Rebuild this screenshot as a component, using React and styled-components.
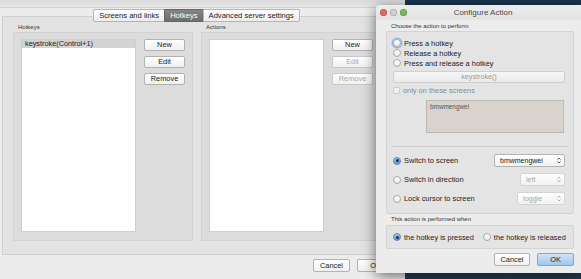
import React from 'react';
import styled, { createGlobalStyle, css } from 'styled-components';

const Global = createGlobalStyle`
  html, body { margin: 0; padding: 0; }
  body {
    width: 581px;
    height: 279px;
    overflow: hidden;
    font-family: "Liberation Sans", Arial, sans-serif;
    color: #222;
  }
`;

const Desktop = styled.div`
  position: relative;
  width: 581px;
  height: 279px;
  overflow: hidden;
  background: linear-gradient(180deg, #1b344f 0%, #223d5a 100%);
`;

/* ---------- main window (behind) ---------- */

const MainWindow = styled.div`
  position: absolute;
  left: 0;
  top: 0;
  width: 405px;
  height: 279px;
  background: #ececec;
  display: flex;
  flex-direction: column;
`;

const TopStrip = styled.div`
  height: 7px;
  background: linear-gradient(180deg, #dadada, #e6e6e6);
  border-bottom: 1px solid #d2d2d2;
`;

const TabArea = styled.div`
  display: flex;
  flex-direction: column;
  padding: 1px 13px 0 2px;
`;

const TabRow = styled.div`
  display: flex;
  justify-content: center;
  margin-bottom: -6px;
  position: relative;
  z-index: 1;
`;

const Tab = styled.div`
  height: 11px;
  padding: 0 5px;
  font-size: 7.6px;
  line-height: 11px;
  border: 1px solid #b4b4b4;
  margin-left: -1px;
  background: linear-gradient(180deg, #ffffff, #ececec);
  color: #222;
  ${({ $active }) =>
    $active &&
    css`
      background: linear-gradient(180deg, #858585, #6c6c6c);
      border-color: #666;
      color: #fff;
    `}
  &:first-child { border-radius: 2px 0 0 2px; }
  &:last-child { border-radius: 0 2px 2px 0; }
`;

const Panel = styled.div`
  height: 239px;
  box-sizing: border-box;
  border: 1px solid #d0d0d0;
  background: #e3e3e3;
  padding: 7px 0 0 10px;
  display: flex;
  gap: 8px;
`;

const Group = styled.div`
  display: flex;
  flex-direction: column;
  width: 180px;
`;

const GroupLabel = styled.div`
  font-size: 6px;
  line-height: 7px;
  height: 8px;
  padding-left: 5px;
  color: #333;
`;

const GroupBox = styled.div`
  height: 209px;
  box-sizing: border-box;
  border: 1px solid #d2d2d2;
  background: #dcdcdc;
  padding: 6px 7px;
  display: flex;
  gap: 8px;
`;

const List = styled.div`
  width: 116px;
  height: 193px;
  background: #fff;
  border: 1px solid #cfcfcf;
  box-sizing: border-box;
`;

const ListRow = styled.div`
  height: 8px;
  line-height: 8px;
  font-size: 7.3px;
  padding-left: 3px;
  background: #d3d3d3;
  color: #222;
`;

const ButtonColumn = styled.div`
  display: flex;
  flex-direction: column;
  gap: 5px;
`;

const PushButton = styled.div`
  width: ${({ $w }) => $w || 41}px;
  height: ${({ $h }) => $h || 12}px;
  box-sizing: border-box;
  border: 1px solid #b2b2b2;
  border-radius: 2px;
  background: linear-gradient(180deg, #ffffff, #f0f0f0);
  font-size: 7.4px;
  line-height: ${({ $h }) => ($h || 12) - 2}px;
  text-align: center;
  white-space: nowrap;
  color: ${({ $disabled }) => ($disabled ? '#a8a8a8' : '#222')};
  border-color: ${({ $disabled }) => ($disabled ? '#c8c8c8' : '#b2b2b2')};
  ${({ $primary }) =>
    $primary &&
    css`
      background: linear-gradient(180deg, #cfe4f8, #9ec7ee);
      border-color: #7fa7d2;
    `}
`;

const BottomBar = styled.div`
  display: flex;
  justify-content: flex-end;
  gap: 7px;
  padding: 4px 11px 0 0;
`;

/* ---------- dialog ---------- */

const Dialog = styled.div`
  position: absolute;
  left: 376px;
  top: 5px;
  width: 210px;
  height: 268px;
  background: #ececec;
  border-radius: 4px 4px 0 0;
  box-shadow: 0 3px 14px rgba(0, 0, 0, 0.55);
  display: flex;
  flex-direction: column;
`;

const TitleBar = styled.div`
  height: 15px;
  display: flex;
  align-items: center;
  padding-left: 4px;
  background: linear-gradient(180deg, #ececec, #e2e2e2);
  border-radius: 4px 4px 0 0;
`;

const Light = styled.span`
  width: 7px;
  height: 7px;
  border-radius: 50%;
  margin-right: 3px;
  background: ${({ $c }) => $c};
  box-shadow: inset 0 0 0 0.6px rgba(0, 0, 0, 0.25);
`;

const Title = styled.div`
  flex: 1;
  text-align: center;
  font-size: 8px;
  color: #4a4a4a;
  padding-right: 30px;
`;

const DialogBody = styled.div`
  padding: 0 12px 0 10px;
  display: flex;
  flex-direction: column;
`;

const Box = styled.div`
  box-sizing: border-box;
  border: 1px solid #d3d3d3;
  background: #e4e4e4;
  border-radius: 2px;
  padding: ${({ $pad }) => $pad || '6px 7px'};
  display: flex;
  flex-direction: ${({ $row }) => ($row ? 'row' : 'column')};
  align-items: ${({ $row }) => ($row ? 'center' : 'stretch')};
  height: ${({ $h }) => $h}px;
`;

const OptionRow = styled.div`
  display: flex;
  align-items: center;
  white-space: nowrap;
  height: ${({ $h }) => $h || 10}px;
  font-size: 7.4px;
  color: ${({ $muted }) => ($muted ? '#8a8a8a' : '#222')};
  gap: 3px;
`;

const Radio = styled.span`
  width: 8px;
  height: 8px;
  box-sizing: border-box;
  border-radius: 50%;
  border: 1px solid #a9a9a9;
  background: linear-gradient(180deg, #ffffff, #ececec);
  display: inline-flex;
  align-items: center;
  justify-content: center;
  flex: none;
  ${({ $focus }) =>
    $focus &&
    css`
      box-shadow: 0 0 0 1.5px #8db8e6;
    `}
  ${({ $checked }) =>
    $checked &&
    css`
      background: linear-gradient(180deg, #9fc6ee, #5d9ae0);
      border-color: #5a86bb;
      &::after {
        content: '';
        width: 3px;
        height: 3px;
        border-radius: 50%;
        background: #1b2a3c;
      }
    `}
`;

const Check = styled.span`
  width: 7px;
  height: 7px;
  box-sizing: border-box;
  border-radius: 1px;
  border: 1px solid #cdcdcd;
  background: #efefef;
  flex: none;
`;

const WideButton = styled.div`
  height: 12px;
  box-sizing: border-box;
  border: 1px solid #cfcfcf;
  border-radius: 2px;
  background: linear-gradient(180deg, #f6f6f6, #ebebeb);
  text-align: center;
  font-size: 7.2px;
  line-height: 10px;
  color: #9a9a9a;
  margin: 3px 1px 2px 0;
`;

const ScreensList = styled.div`
  margin: 5px 2px 0 33px;
  height: 33px;
  box-sizing: border-box;
  background: #d8d3cc;
  border: 1px solid #bdb8b1;
  font-size: 6.4px;
  color: #555;
  padding: 2px 3px;
`;

const Separator = styled.div`
  height: 1px;
  background: #cccccc;
  margin: 13px -2px 4px -2px;
`;

const SwitchRow = styled(OptionRow)`
  justify-content: space-between;
  height: 19px;
`;

const RadioLabel = styled.div`
  display: flex;
  align-items: center;
  gap: 3px;
`;

const Popup = styled.div`
  width: ${({ $w }) => $w}px;
  height: 13px;
  box-sizing: border-box;
  border: 1px solid ${({ $disabled }) => ($disabled ? '#d4d4d4' : '#b4b4b4')};
  border-radius: 2px;
  background: linear-gradient(180deg, #ffffff, #f1f1f1);
  display: flex;
  align-items: center;
  font-size: 7px;
  color: ${({ $disabled }) => ($disabled ? '#a9a9a9' : '#222')};
  padding: 0 3px 0 5px;
  margin-right: 1px;
`;

const PopupText = styled.span`
  flex: 1;
`;

const Arrows = ({ color }) => (
  <svg width="4" height="7" viewBox="0 0 4 7">
    <path d="M0.5 2.5 L2 1 L3.5 2.5 M0.5 4.5 L2 6 L3.5 4.5" fill="none" stroke={color} strokeWidth="0.9" />
  </svg>
);

const SmallLabel = styled.div`
  font-size: 6px;
  line-height: 7px;
  color: #333;
  padding-left: 5px;
  margin: ${({ $m }) => $m || '0'};
`;

const WhenRow = styled.div`
  display: flex;
  align-items: center;
  gap: 9px;
`;

const DialogButtons = styled.div`
  display: flex;
  justify-content: flex-end;
  gap: 7px;
  padding: 4px 0 0 0;
`;

export default function App() {
  return (
    <Desktop>
      <Global />
      <MainWindow>
        <TopStrip />
        <TabArea>
          <TabRow>
            <Tab>Screens and links</Tab>
            <Tab $active>Hotkeys</Tab>
            <Tab>Advanced server settings</Tab>
          </TabRow>
          <Panel>
            <Group>
              <GroupLabel>Hotkeys</GroupLabel>
              <GroupBox>
                <List>
                  <ListRow>keystroke(Control+1)</ListRow>
                </List>
                <ButtonColumn>
                  <PushButton>New</PushButton>
                  <PushButton>Edit</PushButton>
                  <PushButton>Remove</PushButton>
                </ButtonColumn>
              </GroupBox>
            </Group>
            <Group>
              <GroupLabel>Actions</GroupLabel>
              <GroupBox>
                <List />
                <ButtonColumn>
                  <PushButton>New</PushButton>
                  <PushButton $disabled>Edit</PushButton>
                  <PushButton $disabled>Remove</PushButton>
                </ButtonColumn>
              </GroupBox>
            </Group>
          </Panel>
        </TabArea>
        <BottomBar>
          <PushButton $w={37} $h={13}>Cancel</PushButton>
          <PushButton $w={37} $h={13}>OK</PushButton>
        </BottomBar>
      </MainWindow>

      <Dialog>
        <TitleBar>
          <Light $c="#e06a62" />
          <Light $c="#cfcfcf" />
          <Light $c="#78b85c" />
          <Title>Configure Action</Title>
        </TitleBar>
        <DialogBody>
          <SmallLabel $m="3px 0 1px 0">Choose the action to perform</SmallLabel>
          <Box $h={183} $pad="6px 7px 0 6px">
            <OptionRow>
              <Radio $focus />
              Press a hotkey
            </OptionRow>
            <OptionRow>
              <Radio />
              Release a hotkey
            </OptionRow>
            <OptionRow>
              <Radio />
              Press and release a hotkey
            </OptionRow>
            <WideButton>keystroke()</WideButton>
            <OptionRow $muted>
              <Check />
              only on these screens
            </OptionRow>
            <ScreensList>bmwmengwei</ScreensList>
            <Separator />
            <SwitchRow>
              <RadioLabel>
                <Radio $checked />
                Switch to screen
              </RadioLabel>
              <Popup $w={71}>
                <PopupText>bmwmengwei</PopupText>
                <Arrows color="#444" />
              </Popup>
            </SwitchRow>
            <SwitchRow>
              <RadioLabel>
                <Radio />
                Switch in direction
              </RadioLabel>
              <Popup $w={45} $disabled>
                <PopupText>left</PopupText>
                <Arrows color="#aaa" />
              </Popup>
            </SwitchRow>
            <SwitchRow>
              <RadioLabel>
                <Radio />
                Lock cursor to screen
              </RadioLabel>
              <Popup $w={48} $disabled>
                <PopupText>toggle</PopupText>
                <Arrows color="#aaa" />
              </Popup>
            </SwitchRow>
          </Box>
          <SmallLabel $m="2px 0 2px 0">This action is performed when</SmallLabel>
          <Box $h={24} $pad="0 6px" $row>
            <WhenRow>
              <OptionRow>
                <Radio $checked />
                the hotkey is pressed
              </OptionRow>
              <OptionRow>
                <Radio />
                the hotkey is released
              </OptionRow>
            </WhenRow>
          </Box>
          <DialogButtons>
            <PushButton $w={36} $h={13}>Cancel</PushButton>
            <PushButton $w={37} $h={13} $primary>OK</PushButton>
          </DialogButtons>
        </DialogBody>
      </Dialog>
    </Desktop>
  );
}
